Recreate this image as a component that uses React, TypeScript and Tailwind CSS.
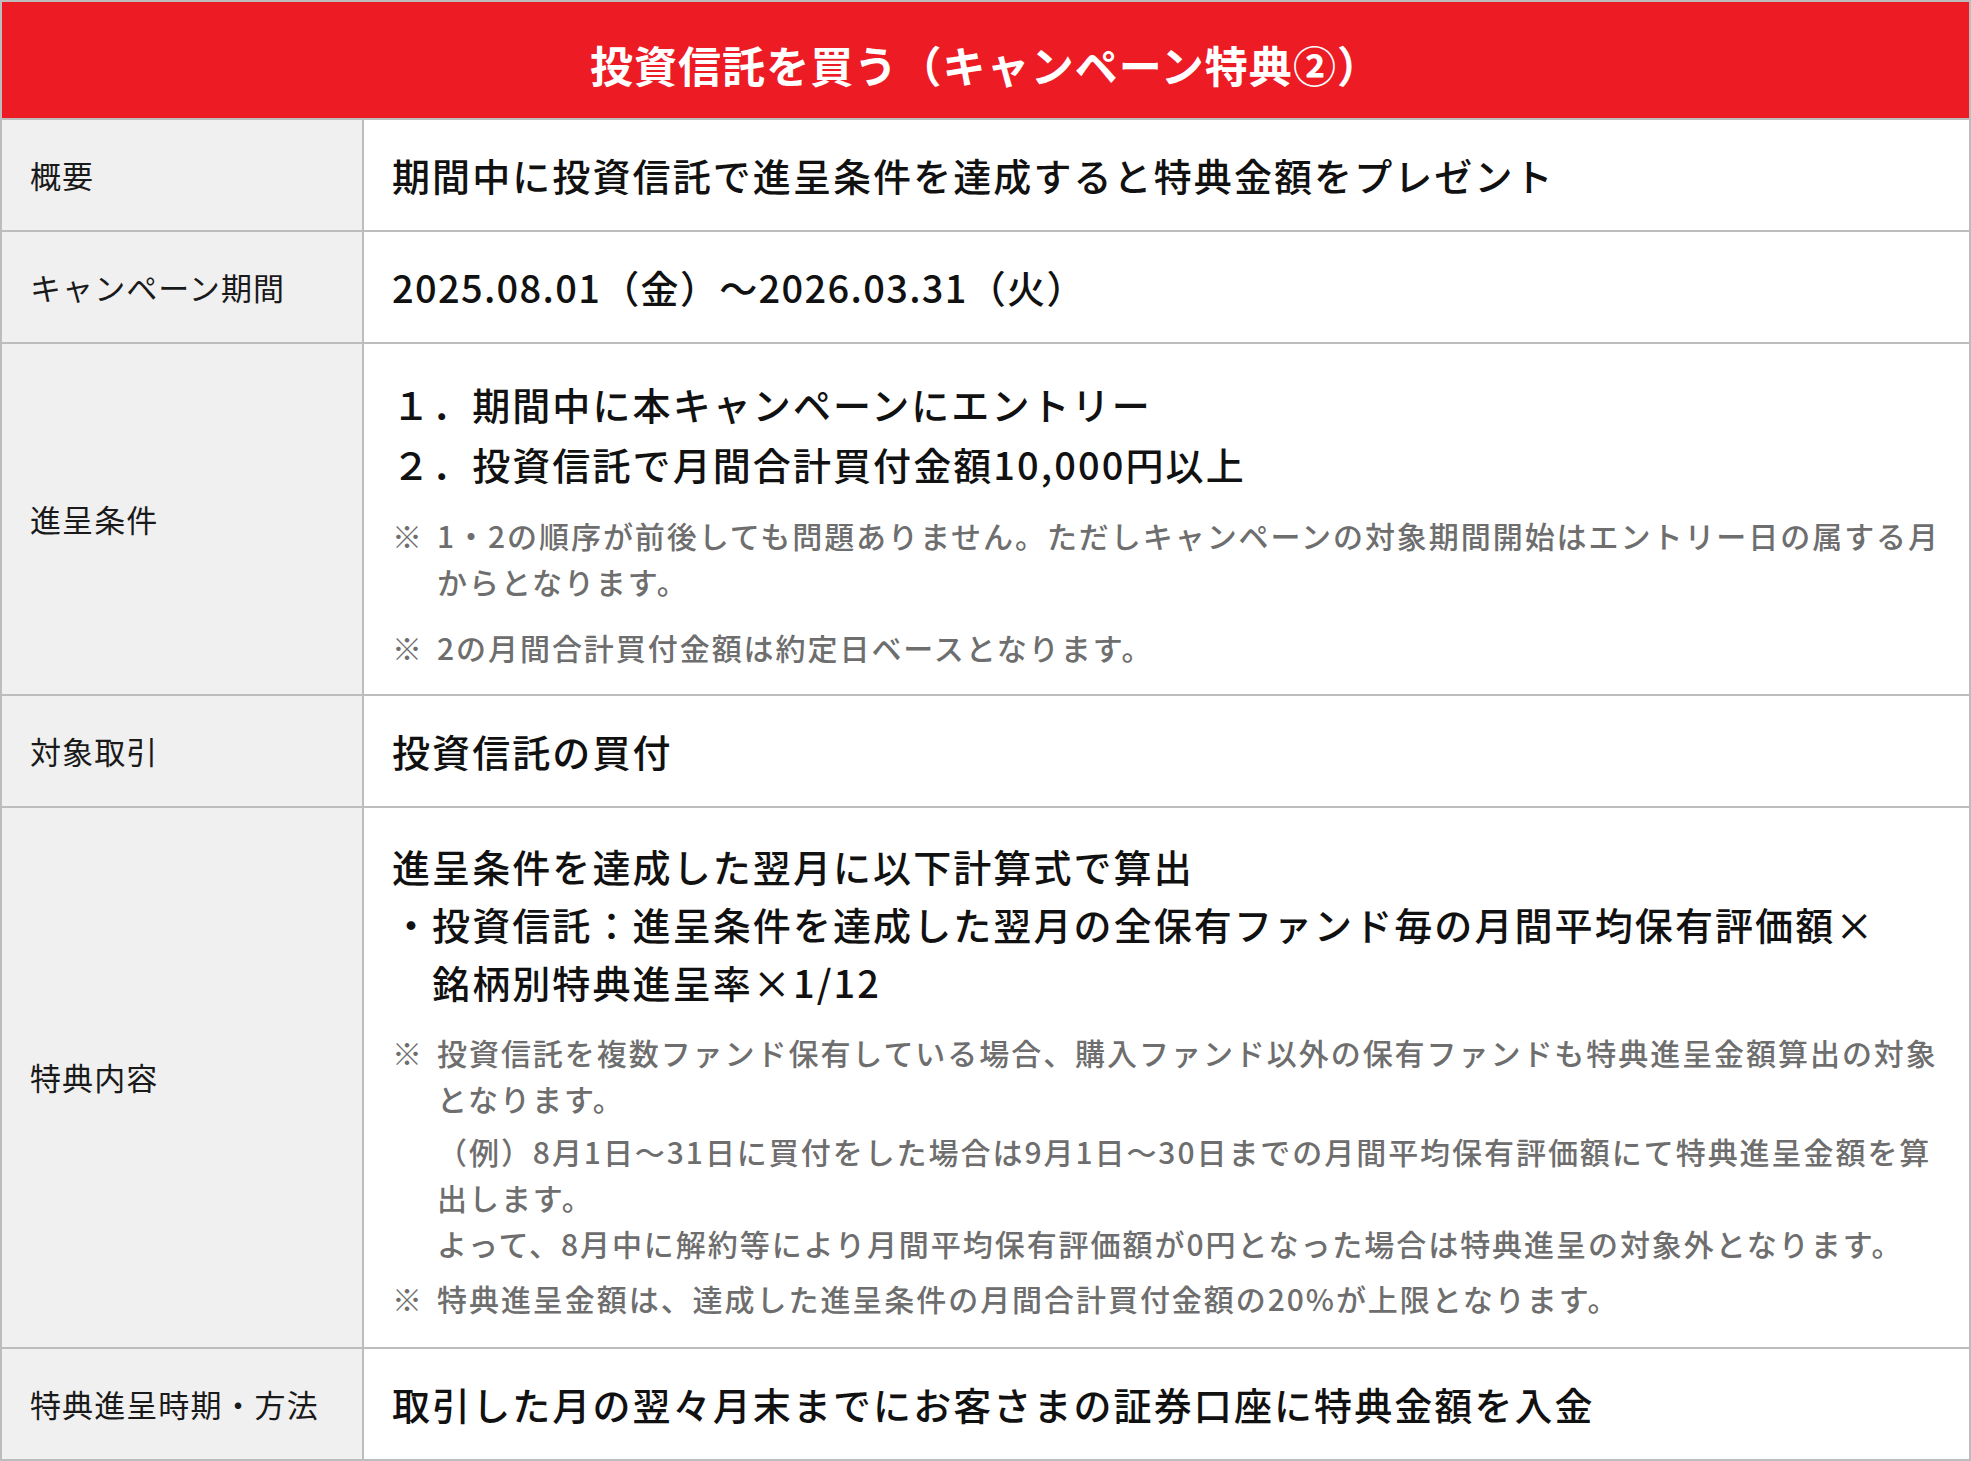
import React from "react";

const font = { fontFamily: '"Noto Sans CJK JP", "Noto Sans", sans-serif' };

function Row({
  label,
  children,
  bodyClass = "py-[26px]",
}: {
  label: string;
  children: React.ReactNode;
  bodyClass?: string;
}) {
  return (
    <div className="flex border-t-2 border-[#bdbdbd]">
      <div className="w-[362px] shrink-0 flex items-center bg-[#f0f0f0] border-r-2 border-[#bdbdbd] pl-[28px] text-[31px] tracking-[0.035em] text-[#1a1a1a]">
        {label}
      </div>
      <div className={"flex-1 pl-[28px] pr-[24px] text-[38px] font-medium tracking-[0.055em] text-[#111] " + bodyClass}>
        {children}
      </div>
    </div>
  );
}

function Note({ children, className = "" }: { children: React.ReactNode; className?: string }) {
  return (
    <div className={"flex text-[30px] leading-[46px] tracking-[0.065em] text-[#6e6e6e] " + className}>
      <span className="w-[45px] shrink-0">※</span>
      <div>{children}</div>
    </div>
  );
}

export default function App() {
  return (
    <div style={font} className="w-[1971px] bg-white border-2 border-[#bdbdbd]">
      {/* header */}
      <div className="h-[116px] bg-[#ec1b24] flex items-center justify-center pt-2">
        <h1 className="text-white font-bold text-[43px] tracking-[0.025em]">
          投資信託を買う（キャンペーン特典②）
        </h1>
      </div>

      <Row label="概要">
        <p className="leading-[58px]">期間中に投資信託で進呈条件を達成すると特典金額をプレゼント</p>
      </Row>

      <Row label="キャンペーン期間">
        <p className="leading-[58px] tracking-[0.035em]">2025.08.01（金）～2026.03.31（火）</p>
      </Row>

      <Row label="進呈条件" bodyClass="pt-[30px] pb-[24px]">
        <ol className="leading-[60px]">
          <li>１．期間中に本キャンペーンにエントリー</li>
          <li>２．投資信託で月間合計買付金額10,000円以上</li>
        </ol>
        <Note className="mt-[18px]">
          1・2の順序が前後しても問題ありません。ただしキャンペーンの対象期間開始はエントリー日の属する月からとなります。
        </Note>
        <Note className="mt-[20px]">2の月間合計買付金額は約定日ベースとなります。</Note>
      </Row>

      <Row label="対象取引">
        <p className="leading-[58px]">投資信託の買付</p>
      </Row>

      <Row label="特典内容" bodyClass="pt-[29px] pb-[26px]">
        <div className="leading-[58px]">
          <p>進呈条件を達成した翌月に以下計算式で算出</p>
          <div className="flex">
            <span className="shrink-0">・</span>
            <p>
              投資信託：進呈条件を達成した翌月の全保有ファンド毎の月間平均保有評価額×
              <br />
              銘柄別特典進呈率×1/12
            </p>
          </div>
        </div>
        <Note className="mt-[18px]">
          投資信託を複数ファンド保有している場合、購入ファンド以外の保有ファンドも特典進呈金額算出の対象となります。
        </Note>
        <div className="mt-[7px] pl-[45px] text-[30px] leading-[46px] tracking-[0.065em] text-[#6e6e6e]">
          <p>（例）8月1日～31日に買付をした場合は9月1日～30日までの月間平均保有評価額にて特典進呈金額を算出します。</p>
          <p>よって、8月中に解約等により月間平均保有評価額が0円となった場合は特典進呈の対象外となります。</p>
        </div>
        <Note className="mt-[9px]">
          特典進呈金額は、達成した進呈条件の月間合計買付金額の20%が上限となります。
        </Note>
      </Row>

      <Row label="特典進呈時期・方法">
        <p className="leading-[58px]">取引した月の翌々月末までにお客さまの証券口座に特典金額を入金</p>
      </Row>
    </div>
  );
}
